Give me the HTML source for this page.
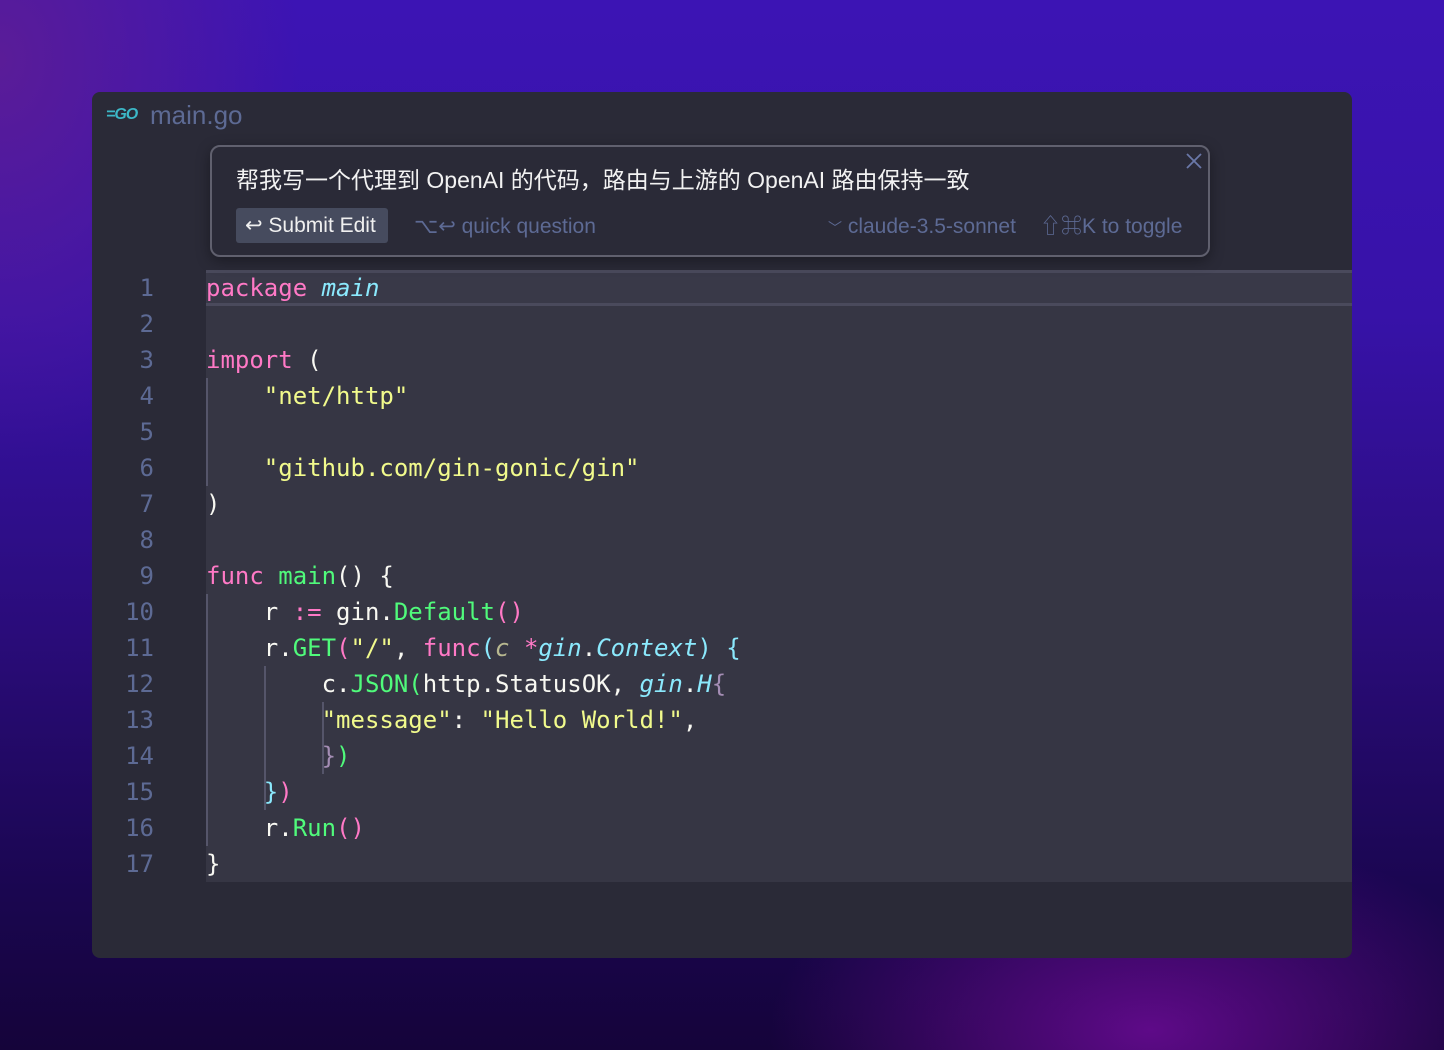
<!DOCTYPE html>
<html><head><meta charset="utf-8"><style>
*{margin:0;padding:0;box-sizing:border-box}
html,body{width:1444px;height:1050px;overflow:hidden}
body{position:relative;font-family:"Liberation Sans","Noto Sans CJK SC",sans-serif;
background:
radial-gradient(ellipse 380px 200px at 1150px 1030px,#5e0a88 0%,rgba(94,10,136,0) 100%),
radial-gradient(ellipse 300px 400px at 0px 60px,#5a1c98 0%,rgba(90,28,152,0) 100%),
linear-gradient(180deg,#3c14b4 0%,#3712a8 30%,#2a0c7a 60%,#1a0650 85%,#15043a 100%);}
.win{position:absolute;left:92px;top:92px;width:1260px;height:866px;background:#2a2a37;border-radius:8px;overflow:hidden}
.title{position:absolute;left:150px;top:100px;font-size:26px;color:#5d6a94;line-height:30px}
.go{position:absolute;left:106px;top:106px;font:italic bold 16px "Liberation Sans",sans-serif;color:#3cb8c8;letter-spacing:-1px}
.code{position:absolute;left:206px;top:270px;width:1146px;height:612px;background:#363644}
.cur{position:absolute;left:206px;top:270px;width:1146px;height:36px;border-top:3px solid #4a4a5c;border-bottom:3px solid #4a4a5c;background:#393948}
.ln{position:absolute;left:100px;width:54px;text-align:right;font:24px/36px "DejaVu Sans Mono",monospace;color:#5d6a94}
.l{position:absolute;left:206px;font:24px/36px "DejaVu Sans Mono",monospace;color:#f8f8f2;white-space:pre}
.k{color:#ff79c6}.g{color:#50fa7b}.y{color:#f1fa8c}.c{color:#8be9fd}.i{font-style:italic}.o{color:#b8b890}.p{color:#a48db4}
.guide{position:absolute;width:2px;background:#55556a}
.pop{position:absolute;left:210px;top:145px;width:1000px;height:112px;border:2px solid #60606e;border-radius:10px;background:#2a2a37;box-shadow:0 4px 14px rgba(0,0,0,.35)}
.q{position:absolute;left:236px;top:165px;font-size:23px;color:#f2f2f2;line-height:30px;white-space:pre}
.btn{position:absolute;left:236px;top:208px;width:152px;height:35px;background:#464b5e;border-radius:3px;color:#f0f0f0;font-size:21px;line-height:35px;padding-left:9px;white-space:pre}
.m{position:absolute;top:209px;font-size:21px;line-height:35px;color:#5d6a94;white-space:pre}
</style></head><body>
<div class="win"></div>
<div class="go">=GO</div>
<div class="title">main.go</div>
<div class="code"></div>
<div class="cur"></div>

<div class="guide" style="left:206px;top:378px;height:108px"></div>
<div class="guide" style="left:206px;top:594px;height:252px"></div>
<div class="guide" style="left:264px;top:666px;height:144px"></div>
<div class="guide" style="left:322px;top:702px;height:72px"></div>

<div class="ln" style="top:270px">1</div><div class="ln" style="top:306px">2</div><div class="ln" style="top:342px">3</div><div class="ln" style="top:378px">4</div><div class="ln" style="top:414px">5</div><div class="ln" style="top:450px">6</div><div class="ln" style="top:486px">7</div><div class="ln" style="top:522px">8</div><div class="ln" style="top:558px">9</div><div class="ln" style="top:594px">10</div><div class="ln" style="top:630px">11</div><div class="ln" style="top:666px">12</div><div class="ln" style="top:702px">13</div><div class="ln" style="top:738px">14</div><div class="ln" style="top:774px">15</div><div class="ln" style="top:810px">16</div><div class="ln" style="top:846px">17</div>

<div class="l" style="top:270px"><span class="k">package</span> <span class="c i">main</span></div>
<div class="l" style="top:342px"><span class="k">import</span> (</div>
<div class="l" style="top:378px">    <span class="y">"net/http"</span></div>
<div class="l" style="top:450px">    <span class="y">"github.com/gin-gonic/gin"</span></div>
<div class="l" style="top:486px">)</div>
<div class="l" style="top:558px"><span class="k">func</span> <span class="g">main</span>() {</div>
<div class="l" style="top:594px">    r <span class="k">:=</span> gin.<span class="g">Default</span><span class="k">()</span></div>
<div class="l" style="top:630px">    r.<span class="g">GET</span><span class="k">(</span><span class="y">"/"</span>, <span class="k">func</span><span class="c">(</span><span class="o i">c</span> <span class="k">*</span><span class="c i">gin</span>.<span class="c i">Context</span><span class="c">)</span> <span class="c">{</span></div>
<div class="l" style="top:666px">        c.<span class="g">JSON</span><span class="g">(</span>http.StatusOK, <span class="c i">gin</span>.<span class="c i">H</span><span class="p">{</span></div>
<div class="l" style="top:702px">        <span class="y">"message"</span>: <span class="y">"Hello World!"</span>,</div>
<div class="l" style="top:738px">        <span class="p">}</span><span class="g">)</span></div>
<div class="l" style="top:774px">    <span class="c">}</span><span class="k">)</span></div>
<div class="l" style="top:810px">    r.<span class="g">Run</span><span class="k">()</span></div>
<div class="l" style="top:846px">}</div>

<div class="pop"></div>
<svg style="position:absolute;left:1186px;top:153px" width="16" height="16" viewBox="0 0 16 16"><path d="M1 1L15 15M15 1L1 15" stroke="#6a78a8" stroke-width="1.8"/></svg>
<div class="q">帮我写一个代理到 OpenAI 的代码，路由与上游的 OpenAI 路由保持一致</div>
<div class="btn">↩ Submit Edit</div>
<div class="m" style="left:414px">⌥↩ quick question</div>
<div class="m" style="left:828px"><span style="font-size:14px">﹀</span> claude-3.5-sonnet</div>
<div class="m" style="left:1040px">⇧⌘K to toggle</div>
</body></html>
